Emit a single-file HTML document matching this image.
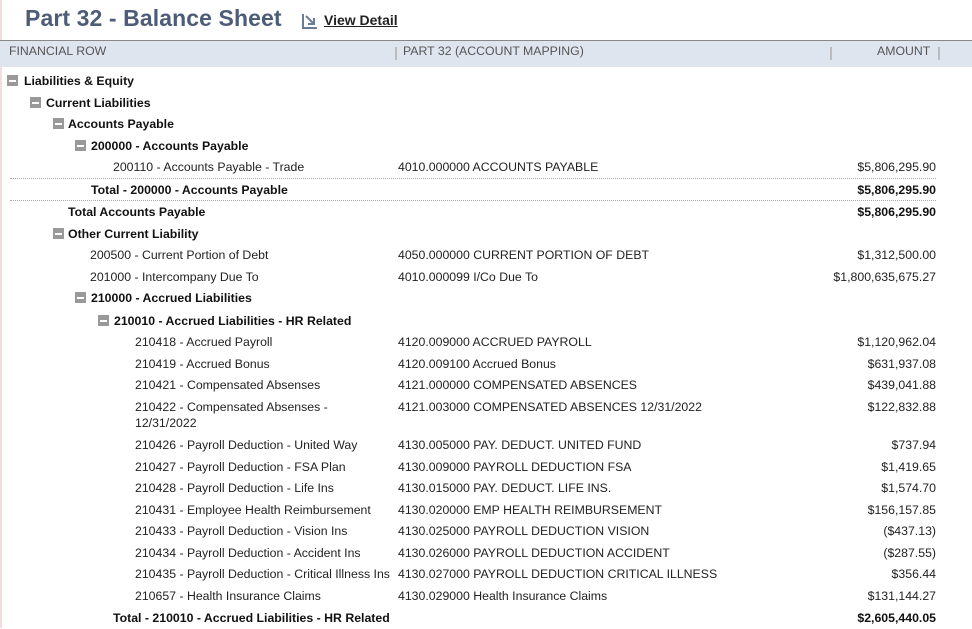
<!DOCTYPE html>
<html><head><meta charset="utf-8"><style>
body{margin:0;width:972px;height:628px;overflow:hidden;background:#fff;font-family:"Liberation Sans",sans-serif;font-size:12.3px;color:#222;position:relative}
.edge{position:absolute;left:0;top:0;width:2px;height:628px;background:#f1dede}
.t{position:absolute;left:25px;top:5px;font-size:23px;font-weight:bold;color:#4d5d78;letter-spacing:0.1px}
.vd{position:absolute;left:324px;top:12px;font-size:14px;font-weight:bold;text-decoration:underline;color:#222}
.ic{position:absolute;left:301px;top:12px}
.hd{position:absolute;left:0;top:40px;width:972px;height:26px;background:#dfe5ee;border-top:1px solid #888;font-size:12.3px;color:#555}
.hd span{position:absolute;top:3px}
.sep{position:absolute;top:6px;width:2px;height:13px;background:#bbb}
.w{position:absolute;left:0;top:1px;width:972px;height:628px}
.r{position:absolute;white-space:nowrap;line-height:16px}
.b{font-weight:bold;color:#111}
.a{position:absolute;right:36px;white-space:nowrap;line-height:16px}
.m{position:absolute;left:398px;white-space:nowrap;line-height:16px}
.mi{position:absolute;width:11px;height:11px;background:#999}
.mi:after{content:"";position:absolute;left:2px;top:5px;width:7px;height:1.5px;background:#fff}
.dl{position:absolute;left:10px;width:926px;border-top:1px dotted #aaa}
</style></head><body>
<div class="edge"></div>
<div class="t">Part 32 - Balance Sheet</div>
<svg class="ic" width="18" height="18" viewBox="0 0 18 18"><path d="M2 2v14h14" fill="none" stroke="#6b7d96" stroke-width="2"/><path d="M5 4l8 8M13 6v6H7" fill="none" stroke="#6b7d96" stroke-width="2"/></svg>
<div class="vd">View Detail</div>
<div class="hd"><span style="left:9px">FINANCIAL ROW</span><div class="sep" style="left:395px"></div><span style="left:403px">PART 32 (ACCOUNT MAPPING)</span><div class="sep" style="left:830px"></div><span style="left:877px">AMOUNT</span><div class="sep" style="left:938px"></div></div>
<div class="w">
<div class="mi" style="left:7px;top:74px"></div><div class="r b" style="left:24px;top:72px">Liabilities &amp; Equity</div>
<div class="mi" style="left:30px;top:96px"></div><div class="r b" style="left:46px;top:94px">Current Liabilities</div>
<div class="mi" style="left:53px;top:117px"></div><div class="r b" style="left:68px;top:115px">Accounts Payable</div>
<div class="mi" style="left:75px;top:139px"></div><div class="r b" style="left:91px;top:137px">200000 - Accounts Payable</div>
<div class="r" style="left:113px;top:158px">200110 - Accounts Payable - Trade</div><div class="m" style="top:158px">4010.000000 ACCOUNTS PAYABLE</div><div class="a" style="top:158px">$5,806,295.90</div>
<div class="dl" style="top:177px"></div>
<div class="r b" style="left:91px;top:181px">Total - 200000 - Accounts Payable</div><div class="a b" style="top:181px">$5,806,295.90</div>
<div class="dl" style="top:199px"></div>
<div class="r b" style="left:68px;top:203px">Total Accounts Payable</div><div class="a b" style="top:203px">$5,806,295.90</div>
<div class="mi" style="left:53px;top:227px"></div><div class="r b" style="left:68px;top:225px">Other Current Liability</div>
<div class="r" style="left:90px;top:246px">200500 - Current Portion of Debt</div><div class="m" style="top:246px">4050.000000 CURRENT PORTION OF DEBT</div><div class="a" style="top:246px">$1,312,500.00</div>
<div class="r" style="left:90px;top:268px">201000 - Intercompany Due To</div><div class="m" style="top:268px">4010.000099 I/Co Due To</div><div class="a" style="top:268px">$1,800,635,675.27</div>
<div class="mi" style="left:75px;top:291px"></div><div class="r b" style="left:91px;top:289px">210000 - Accrued Liabilities</div>
<div class="mi" style="left:98px;top:314px"></div><div class="r b" style="left:114px;top:312px">210010 - Accrued Liabilities - HR Related</div>
<div class="r" style="left:135px;top:333px">210418 - Accrued Payroll</div><div class="m" style="top:333px">4120.009000 ACCRUED PAYROLL</div><div class="a" style="top:333px">$1,120,962.04</div>
<div class="r" style="left:135px;top:355px">210419 - Accrued Bonus</div><div class="m" style="top:355px">4120.009100 Accrued Bonus</div><div class="a" style="top:355px">$631,937.08</div>
<div class="r" style="left:135px;top:376px">210421 - Compensated Absenses</div><div class="m" style="top:376px">4121.000000 COMPENSATED ABSENCES</div><div class="a" style="top:376px">$439,041.88</div>
<div class="r" style="left:135px;top:398px">210422 - Compensated Absenses -<br>12/31/2022</div><div class="m" style="top:398px">4121.003000 COMPENSATED ABSENCES 12/31/2022</div><div class="a" style="top:398px">$122,832.88</div>
<div class="r" style="left:135px;top:436px">210426 - Payroll Deduction - United Way</div><div class="m" style="top:436px">4130.005000 PAY. DEDUCT. UNITED FUND</div><div class="a" style="top:436px">$737.94</div>
<div class="r" style="left:135px;top:458px">210427 - Payroll Deduction - FSA Plan</div><div class="m" style="top:458px">4130.009000 PAYROLL DEDUCTION FSA</div><div class="a" style="top:458px">$1,419.65</div>
<div class="r" style="left:135px;top:479px">210428 - Payroll Deduction - Life Ins</div><div class="m" style="top:479px">4130.015000 PAY. DEDUCT. LIFE INS.</div><div class="a" style="top:479px">$1,574.70</div>
<div class="r" style="left:135px;top:501px">210431 - Employee Health Reimbursement</div><div class="m" style="top:501px">4130.020000 EMP HEALTH REIMBURSEMENT</div><div class="a" style="top:501px">$156,157.85</div>
<div class="r" style="left:135px;top:522px">210433 - Payroll Deduction - Vision Ins</div><div class="m" style="top:522px">4130.025000 PAYROLL DEDUCTION VISION</div><div class="a" style="top:522px">($437.13)</div>
<div class="r" style="left:135px;top:544px">210434 - Payroll Deduction - Accident Ins</div><div class="m" style="top:544px">4130.026000 PAYROLL DEDUCTION ACCIDENT</div><div class="a" style="top:544px">($287.55)</div>
<div class="r" style="left:135px;top:565px">210435 - Payroll Deduction - Critical Illness Ins</div><div class="m" style="top:565px">4130.027000 PAYROLL DEDUCTION CRITICAL ILLNESS</div><div class="a" style="top:565px">$356.44</div>
<div class="r" style="left:135px;top:587px">210657 - Health Insurance Claims</div><div class="m" style="top:587px">4130.029000 Health Insurance Claims</div><div class="a" style="top:587px">$131,144.27</div>
<div class="r b" style="left:113px;top:609px">Total - 210010 - Accrued Liabilities - HR Related</div><div class="a b" style="top:609px">$2,605,440.05</div>
</div>
</body></html>
